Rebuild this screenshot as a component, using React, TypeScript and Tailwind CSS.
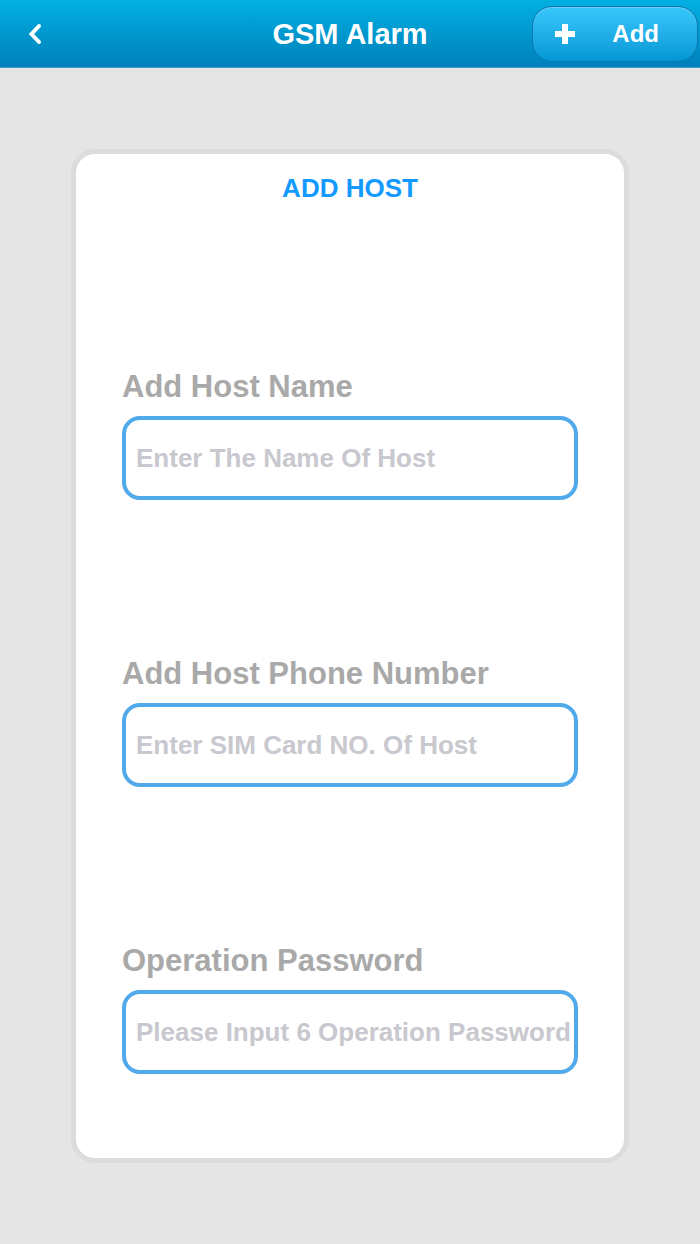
import type React from "react"

import { useState } from "react"

const fields = [
  { id: "host-name", label: "Add Host Name", placeholder: "Enter The Name Of Host", type: "text" },
  { id: "host-phone", label: "Add Host Phone Number", placeholder: "Enter SIM Card NO. Of Host", type: "tel" },
  { id: "password", label: "Operation Password", placeholder: "Please Input 6 Operation Password", type: "password" },
]

export default function App() {
  const [values, setValues] = useState<Record<string, string>>({})

  const handleSubmit = (e: React.FormEvent) => {
    e.preventDefault()
    setValues({})
  }

  return (
    <div className="min-h-screen bg-[#e5e5e5] font-['Liberation_Sans',Arial,sans-serif] font-bold">
      {/* Top bar */}
      <header className="grid h-[68px] grid-cols-[1fr_auto_1fr] items-center border-b border-[#3d9fce] bg-linear-to-b from-[#02b0e3] to-[#0080ba] text-white">
        <button type="button" aria-label="Back" className="flex h-full w-[70px] items-center justify-center">
          <svg width="14" height="22" viewBox="0 0 14 22" fill="none" stroke="currentColor" strokeWidth="4">
            <path d="M11 3 3.500 11l7.500 8" strokeLinecap="round" />
          </svg>
        </button>
        <h1 className="text-[29px] leading-8">GSM Alarm</h1>
        <button
          type="submit"
          form="add-host"
          className="mr-[2px] flex h-14 w-[166px] items-center justify-between justify-self-end rounded-[20px] border border-[#0878ad] bg-linear-to-b from-[#38c8fc] to-[#0097d5] pr-[38px] pl-[22px] text-2xl shadow-[inset_0_1px_0_#70cdf3]"
        >
          <svg width="20" height="20" viewBox="0 0 20 20" fill="currentColor">
            <path d="M7 0h6v7h7v6h-7v7H7v-7H0V7h7z" />
          </svg>
          <span>Add</span>
        </button>
      </header>

      {/* Host form */}
      <main className="px-[71px] py-[81px]">
        <form
          id="add-host"
          onSubmit={handleSubmit}
          className="rounded-3xl border-[5px] border-[#dcdcdc] bg-white px-[46px] pt-[14px] pb-[84px]"
        >
          <h2 className="text-center text-[26px] leading-10 text-[#149aff]">ADD HOST</h2>
          <div className="mt-[159px] flex flex-col gap-[154px]">
            {fields.map((field) => (
              <div key={field.id} className="flex flex-col gap-[9px]">
                <label htmlFor={field.id} className="text-[31px] leading-10 text-[#a9a9a9]">
                  {field.label}
                </label>
                <input
                  id={field.id}
                  type={field.type}
                  value={values[field.id] ?? ""}
                  onChange={(e) => setValues({ ...values, [field.id]: e.target.value })}
                  placeholder={field.placeholder}
                  className="h-[84px] w-full rounded-[18px] border-4 border-[#50a9eb] pr-1 pl-[10px] text-[26px] outline-none placeholder:text-[#c8c8ce] focus:border-[#149aff]"
                />
              </div>
            ))}
          </div>
        </form>
      </main>
    </div>
  )
}
